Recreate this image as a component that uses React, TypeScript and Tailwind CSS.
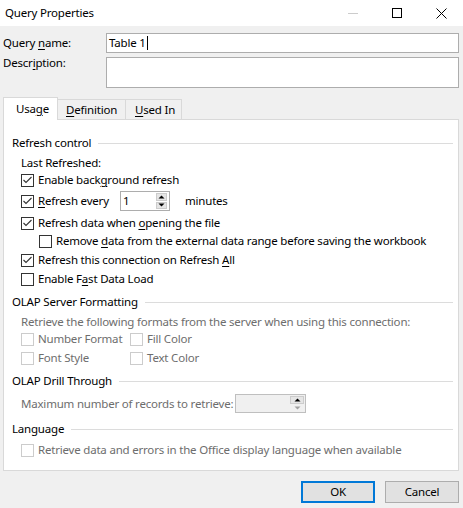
import React from "react";

function Ak({ children }: { children: React.ReactNode }) {
  return <span className="underline decoration-1 underline-offset-[2px]">{children}</span>;
}

function Check({ checked = false, disabled = false }: { checked?: boolean; disabled?: boolean }) {
  return (
    <span
      className={`relative h-[13px] w-[13px] shrink-0 border bg-white ${
        disabled ? "border-[#cccccc]" : "border-[#333333]"
      }`}
    >
      {checked && (
        <svg className="absolute left-0 top-0" width="11" height="11" viewBox="0 0 11 11">
          <path d="M1.5 5 L4 7.5 L9.5 2" fill="none" stroke="#333333" strokeWidth="1.1" />
        </svg>
      )}
    </span>
  );
}

function CheckRow({
  children,
  checked,
  disabled,
  indent = "pl-[9px]",
  mt,
}: {
  children: React.ReactNode;
  checked?: boolean;
  disabled?: boolean;
  indent?: string;
  mt: string;
}) {
  return (
    <div className={`flex h-[16px] items-center ${indent} ${mt}`}>
      <Check checked={checked} disabled={disabled} />
      <span className={`ml-[4px] whitespace-nowrap ${disabled ? "text-[#6d6d6d]" : ""}`}>{children}</span>
    </div>
  );
}

function Group({ title, mt }: { title: string; mt: string }) {
  return (
    <div className={`flex h-[16px] items-center ${mt}`}>
      <span className="whitespace-nowrap">{title}</span>
      <span className="ml-[7px] h-px flex-1 bg-[#dcdcdc]" />
    </div>
  );
}

function Arrow({ up, color }: { up?: boolean; color: string }) {
  return (
    <svg width="7" height="4" viewBox="0 0 7 4">
      <path d={up ? "M0.5 3.5 L3.5 0.5 L6.5 3.5 Z" : "M0.5 0.5 L3.5 3.5 L6.5 0.5 Z"} fill={color} />
    </svg>
  );
}

export default function App() {
  return (
    <div className="flex h-[508px] w-[463px] flex-col overflow-hidden bg-[#f0f0f0] font-['Noto_Sans',sans-serif] text-[11.5px] leading-[16px] tracking-[-0.2px] text-black">
      {/* title bar */}
      <div className="flex h-[26px] shrink-0 items-center bg-white">
        <span className="pl-[5px]">Query Properties</span>
        <div className="ml-auto flex h-full">
          <div className="flex w-[44px] items-center justify-center">
            <span className="h-px w-[10px] bg-[#cccccc]" />
          </div>
          <div className="flex w-[44px] items-center justify-center">
            <span className="h-[10px] w-[10px] border border-black" />
          </div>
          <div className="flex w-[44px] items-center justify-center">
            <svg width="11" height="11" viewBox="0 0 11 11">
              <path d="M0.5 0.5 L10.5 10.5 M10.5 0.5 L0.5 10.5" stroke="#000" strokeWidth="1" />
            </svg>
          </div>
        </div>
      </div>

      <div className="flex flex-col pl-[3px] pr-[4px]">
        {/* query name */}
        <div className="mt-[7px] flex h-[20px] items-center">
          <span className="w-[103px]">
            Query <Ak>n</Ak>ame:
          </span>
          <div className="flex h-[20px] flex-1 items-center border border-[#adadad] bg-white pl-[2px]">
            Table 1<span className="ml-px h-[14px] w-px bg-black" />
          </div>
        </div>
        <div className="mt-[4px] flex items-start">
          <span className="-mt-[2px] w-[103px]">
            Descr<Ak>i</Ak>ption:
          </span>
          <div className="h-[31px] flex-1 border border-[#adadad] bg-white" />
        </div>

        {/* tabs */}
        <div className="mt-[9px] flex h-[22px] items-end">
          <div className="relative z-10 -mb-px flex h-[23px] w-[55px] items-center border border-b-0 border-[#d9d9d9] bg-white pl-[12px]">
            Usa<Ak>g</Ak>e
          </div>
          <div className="flex h-[20px] w-[68px] items-center border border-l-0 border-b-0 border-[#d9d9d9] pl-[8px]">
            <Ak>D</Ak>efinition
          </div>
          <div className="flex h-[20px] w-[56px] items-center border border-l-0 border-b-0 border-[#d9d9d9] pl-[9px]">
            <Ak>U</Ak>sed In
          </div>
        </div>

        {/* panel */}
        <div className="flex h-[352px] w-[456px] flex-col border border-[#d9d9d9] bg-white pl-[8px] pr-[5px]">
          <Group title="Refresh control" mt="mt-[15px]" />
          <div className="mt-[4px] flex h-[16px] items-center pl-[9px]">Last Refreshed:</div>
          <CheckRow checked mt="mt-[1px]">
            Enable back<Ak>g</Ak>round refresh
          </CheckRow>
          <div className="mt-[3px] flex h-[20px] items-center pl-[9px]">
            <Check checked />
            <span className="ml-[4px] w-[82px] whitespace-nowrap">
              <Ak>R</Ak>efresh every
            </span>
            <div className="flex h-[20px] w-[50px] items-center border border-[#adadad] bg-white">
              <span className="flex-1 pl-[2px]">1</span>
              <div className="mr-[2px] flex h-[16px] w-[11px] flex-col gap-px">
                <div className="flex flex-1 items-center justify-center border border-[#cccccc] bg-[#e5e5e5]">
                  <Arrow up color="#000" />
                </div>
                <div className="flex flex-1 items-center justify-center border border-[#cccccc] bg-[#e5e5e5]">
                  <Arrow color="#000" />
                </div>
              </div>
            </div>
            <span className="ml-[15px]">minutes</span>
          </div>
          <CheckRow checked mt="mt-[4px]">
            Refresh data when <Ak>o</Ak>pening the file
          </CheckRow>
          <CheckRow indent="pl-[27px]" mt="mt-[2px]">
            Remove <Ak>d</Ak>ata from the external data range before saving the workbook
          </CheckRow>
          <CheckRow checked mt="mt-[3px]">
            Refresh this connection on Refresh <Ak>A</Ak>ll
          </CheckRow>
          <CheckRow mt="mt-[3px]">
            Enable F<Ak>a</Ak>st Data Load
          </CheckRow>

          <Group title="OLAP Server Formatting" mt="mt-[7px]" />
          <div className="mt-[4px] flex h-[16px] items-center whitespace-nowrap pl-[9px] text-[#6d6d6d]">
            Retrieve the following formats from the server when using this connection:
          </div>
          <div className="mt-[1px] flex">
            <div className="w-[118px]">
              <CheckRow disabled mt="mt-0">
                Number Format
              </CheckRow>
            </div>
            <CheckRow disabled indent="pl-0" mt="mt-0">
              Fill Color
            </CheckRow>
          </div>
          <div className="mt-[3px] flex">
            <div className="w-[118px]">
              <CheckRow disabled mt="mt-0">
                Font Style
              </CheckRow>
            </div>
            <CheckRow disabled indent="pl-0" mt="mt-0">
              Text Color
            </CheckRow>
          </div>

          <Group title="OLAP Drill Through" mt="mt-[7px]" />
          <div className="mt-[5px] flex h-[19px] items-center pl-[9px]">
            <span className="w-[214px] whitespace-nowrap text-[#6d6d6d]">Maximum number of records to retrieve:</span>
            <div className="flex h-[19px] w-[71px] items-center border border-[#bfbfbf] bg-[#f0f0f0]">
              <span className="flex-1" />
              <div className="mr-[1px] flex h-[15px] w-[14px] flex-col gap-px">
                <div className="flex flex-1 items-center justify-center border border-[#cccccc] bg-[#e5e5e5]">
                  <Arrow up color="#000" />
                </div>
                <div className="flex flex-1 items-center justify-center bg-[#f0f0f0]">
                  <Arrow color="#a0a0a0" />
                </div>
              </div>
            </div>
          </div>

          <Group title="Language" mt="mt-[8px]" />
          <CheckRow disabled mt="mt-[5px]">
            Retrieve data and errors in the Office display language when available
          </CheckRow>
        </div>

        {/* buttons */}
        <div className="mt-[10px] flex justify-end gap-[10px]">
          <button className="h-[22px] w-[74px] border-2 border-[#0078d7] bg-[#e1e1e1]">OK</button>
          <button className="h-[22px] w-[74px] border border-[#adadad] bg-[#e1e1e1]">Cancel</button>
        </div>
      </div>
    </div>
  );
}
